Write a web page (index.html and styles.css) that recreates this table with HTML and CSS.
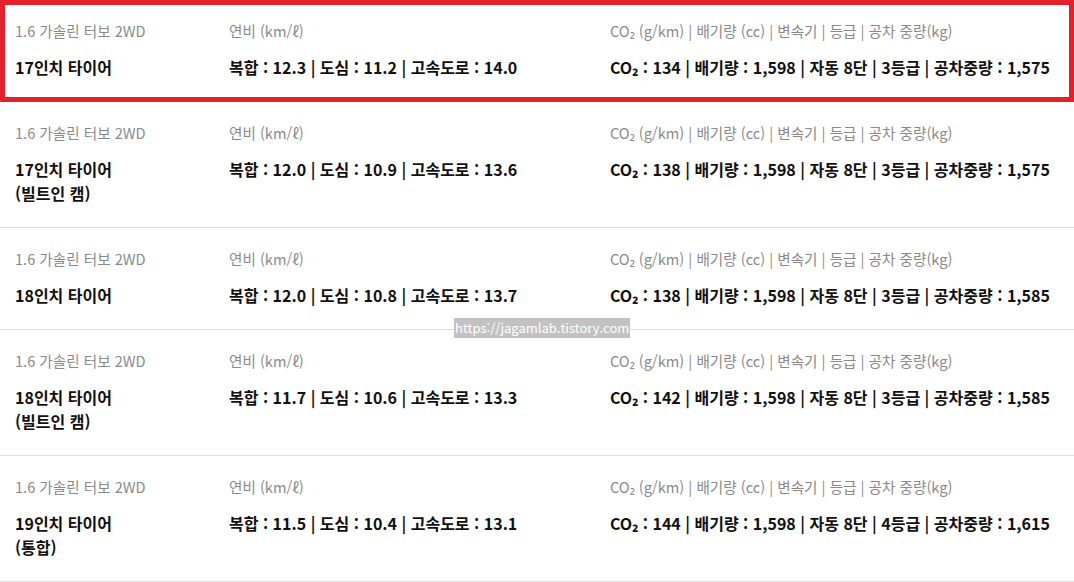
FILE: index.html
```html
<!DOCTYPE html>
<html lang="ko">
<head>
    <meta charset="UTF-8">
    <meta name="viewport" content="width=device-width, initial-scale=1.0">
    <title>제원</title>
    <link rel="stylesheet" href="styles.css">
</head>
<body>
    <div class="spec-list">
        <div class="spec-row highlight">
            <div class="cell">
                <div class="label">1.6 가솔린 터보 2WD</div>
                <div class="value">17인치 타이어</div>
            </div>
            <div class="cell">
                <div class="label">연비 (km/ℓ)</div>
                <div class="value">복합 : 12.3 | 도심 : 11.2 | 고속도로 : 14.0</div>
            </div>
            <div class="cell">
                <div class="label">CO₂ (g/km) | 배기량 (cc) | 변속기 | 등급 | 공차 중량(kg)</div>
                <div class="value">CO₂ : 134 | 배기량 : 1,598 | 자동 8단 | 3등급 | 공차중량 : 1,575</div>
            </div>
        </div>

        <div class="spec-row">
            <div class="cell">
                <div class="label">1.6 가솔린 터보 2WD</div>
                <div class="value">17인치 타이어<br>(빌트인 캠)</div>
            </div>
            <div class="cell">
                <div class="label">연비 (km/ℓ)</div>
                <div class="value">복합 : 12.0 | 도심 : 10.9 | 고속도로 : 13.6</div>
            </div>
            <div class="cell">
                <div class="label">CO₂ (g/km) | 배기량 (cc) | 변속기 | 등급 | 공차 중량(kg)</div>
                <div class="value">CO₂ : 138 | 배기량 : 1,598 | 자동 8단 | 3등급 | 공차중량 : 1,575</div>
            </div>
        </div>

        <div class="spec-row">
            <div class="cell">
                <div class="label">1.6 가솔린 터보 2WD</div>
                <div class="value">18인치 타이어</div>
            </div>
            <div class="cell">
                <div class="label">연비 (km/ℓ)</div>
                <div class="value">복합 : 12.0 | 도심 : 10.8 | 고속도로 : 13.7</div>
            </div>
            <div class="cell">
                <div class="label">CO₂ (g/km) | 배기량 (cc) | 변속기 | 등급 | 공차 중량(kg)</div>
                <div class="value">CO₂ : 138 | 배기량 : 1,598 | 자동 8단 | 3등급 | 공차중량 : 1,585</div>
            </div>
        </div>

        <div class="spec-row">
            <div class="cell">
                <div class="label">1.6 가솔린 터보 2WD</div>
                <div class="value">18인치 타이어<br>(빌트인 캠)</div>
            </div>
            <div class="cell">
                <div class="label">연비 (km/ℓ)</div>
                <div class="value">복합 : 11.7 | 도심 : 10.6 | 고속도로 : 13.3</div>
            </div>
            <div class="cell">
                <div class="label">CO₂ (g/km) | 배기량 (cc) | 변속기 | 등급 | 공차 중량(kg)</div>
                <div class="value">CO₂ : 142 | 배기량 : 1,598 | 자동 8단 | 3등급 | 공차중량 : 1,585</div>
            </div>
        </div>

        <div class="spec-row">
            <div class="cell">
                <div class="label">1.6 가솔린 터보 2WD</div>
                <div class="value">19인치 타이어<br>(통합)</div>
            </div>
            <div class="cell">
                <div class="label">연비 (km/ℓ)</div>
                <div class="value">복합 : 11.5 | 도심 : 10.4 | 고속도로 : 13.1</div>
            </div>
            <div class="cell">
                <div class="label">CO₂ (g/km) | 배기량 (cc) | 변속기 | 등급 | 공차 중량(kg)</div>
                <div class="value">CO₂ : 144 | 배기량 : 1,598 | 자동 8단 | 4등급 | 공차중량 : 1,615</div>
            </div>
        </div>
    </div>

    <div class="watermark">https://jagamlab.tistory.com</div>
</body>
</html>
```

FILE: styles.css
```css
* {
    margin: 0;
    padding: 0;
    box-sizing: border-box;
    font-family: "Noto Sans CJK KR", "Noto Sans", sans-serif;
}

body {
    background: #fff;
    width: 1074px;
    height: 582px;
    overflow: hidden;
    position: relative;
}

.spec-list {
    display: flex;
    flex-direction: column;
}

.spec-row {
    display: grid;
    grid-template-columns: 214px 381px 1fr;
    padding: 21px 0 22px 15px;
    border-bottom: 1px solid #dedede;
    white-space: nowrap;
}

.highlight {
    outline: 5px solid #e4212a;
    outline-offset: -5px;
    height: 102px;
}

.cell {
    display: flex;
    flex-direction: column;
    gap: 14px;
}

.label {
    font-size: 14.6px;
    line-height: 20px;
    color: #8a8a8a;
}

.value {
    font-size: 16px;
    line-height: 24px;
    font-weight: bold;
    color: #111;
}

.watermark {
    position: absolute;
    left: 454px;
    top: 318px;
    height: 20px;
    padding: 0 1px;
    background: #c2c2c2;
    color: #fff;
    font-size: 13px;
    line-height: 20px;
}
```
